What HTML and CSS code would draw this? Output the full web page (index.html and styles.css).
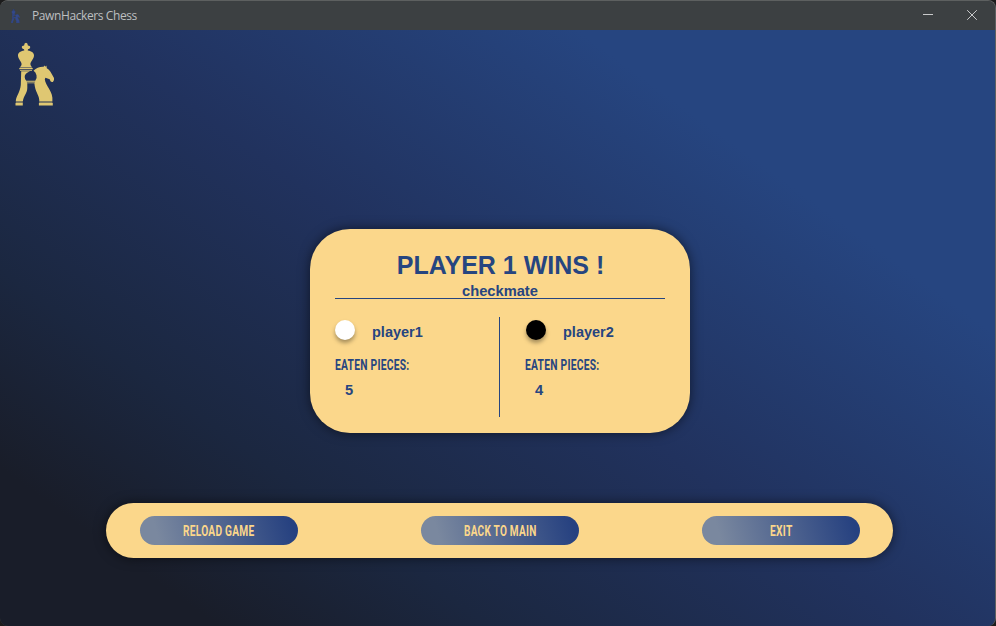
FILE: index.html
```html
<!DOCTYPE html>
<html lang="en">
<head>
<meta charset="utf-8">
<title>PawnHackers Chess</title>
<link rel="stylesheet" href="styles.css">
</head>
<body>
<svg width="0" height="0" class="defs" aria-hidden="true">
  <symbol id="pieces" viewBox="0 0 40 64">
    <path d="M11 .8q1.800 0 1.900 2.600q2.300 0 2.400 1.700t-2.300 2.100l-.3 1.200C17 9.200 19 10.600 19 13.500c0 3.500-3.700 6-3.600 8.800q.1 2 2 3.200H4.600q1.900-1.200 2-3.200C6.700 19.500 3 17 3 13.500c0-2.900 2-4.300 6.300-5.100L9 7.200Q6.700 6.800 6.700 5.100T9.100 3.400Q9.200 .8 11 .8z"/>
    <path d="M4.300 26h13.400v1.200H4.300zM5 27.900h12v.8H5z"/>
    <path d="M6.200 29.300H15q-5.500 2.200-5.300 5.800.1 2.200 1.400 3.300l1.200 3V46c0 5-3.700 8-4.400 12.900H.8C1 54.500 5.200 50 5.800 43z"/>
    <path d="M10.200 38.700h11v1h-11zM10.200 40.400h11v.9h-11z"/>
    <path d="M18.500 28.700q4.200-4.300 10-4l1.300-1.300.7 1.400.9-1.400.4 2.900c3.200 1.600 4.200 4.700 7.200 9.700q.6 2.800-1.100 4-1.700.4-2.400-.7l-.8-2.100-4.300-1.500-.6 1.500c.4 6.300 8.800 12.600 7.600 21.700H24.300c.2-5.500-4.300-9.400-4.900-17.500l1.100-3.200q1.700-1.700 1-5t-3-4.500z"/>
    <path d="M.8 59.500h7v.9h-7zM.5 61h7.300v2.400H.5zM24.200 59.500h13.200v.9H24.200zM23.900 61h13.900v2.400H23.900z"/>
  </symbol>
</svg>
<div class="window">
  <header class="titlebar">
    <svg class="app-icon"><use href="#pieces"/></svg>
    <span class="app-title">PawnHackers Chess</span>
    <svg class="controls" viewBox="0 0 60 14"><path d="M1 6.500h10M45.200 2.200l9.600 9.600M54.800 2.200l-9.600 9.600"/></svg>
  </header>
  <main class="board">
    <svg class="logo"><use href="#pieces"/></svg>
    <section class="card">
      <h1>PLAYER 1 WINS !</h1>
      <p class="reason">checkmate</p>
      <div class="players">
        <div class="player">
          <div class="who"><i class="dot white"></i><span>player1</span></div>
          <svg class="label" width="120" height="24"><text x="0" y="17" textLength="74.500" lengthAdjust="spacingAndGlyphs">EATEN PIECES:</text></svg>
          <b class="count">5</b>
        </div>
        <div class="player second">
          <div class="who"><i class="dot black"></i><span>player2</span></div>
          <svg class="label" width="120" height="24"><text x="0" y="17" textLength="74.500" lengthAdjust="spacingAndGlyphs">EATEN PIECES:</text></svg>
          <b class="count">4</b>
        </div>
      </div>
    </section>
    <nav class="actions">
      <button><svg width="158" height="28"><text x="43" y="18.500" textLength="71.500" lengthAdjust="spacingAndGlyphs">RELOAD GAME</text></svg></button>
      <button><svg width="158" height="28"><text x="43" y="18.500" textLength="72.500" lengthAdjust="spacingAndGlyphs">BACK TO MAIN</text></svg></button>
      <button><svg width="158" height="28"><text x="68" y="18.500" textLength="22.500" lengthAdjust="spacingAndGlyphs">EXIT</text></svg></button>
    </nav>
  </main>
</div>
</body>
</html>
```
FILE: styles.css
```css
* { box-sizing: border-box; }
body { margin: 0; background: #1c1c1c; font-family: "Liberation Sans", Arial, sans-serif; }
.defs { display: block; height: 0; }
.window {
  width: 996px; height: 626px; display: flex; flex-direction: column;
  border: 1px solid #5d6060; border-left: 0; border-bottom: 0;
  border-radius: 8px; overflow: hidden; background: #3c3f41;
}
.titlebar {
  flex: 0 0 29px; display: flex; align-items: center; padding: 0 13px 0 11px;
  background: #3c4042; color: #bdbfc0;
}
.app-icon { width: 9px; height: 14px; fill: #34498a; stroke: #34498a; stroke-width: 1.5px; }
.app-title { margin-left: 12px; font: 12px "Open Sans", "Noto Sans", sans-serif; letter-spacing: -.4px; }
.controls { width: 60px; height: 14px; margin: -2px 0 0 auto; fill: none; stroke: #c9cacb; stroke-width: 1; }
.board {
  flex: 1; display: flex; flex-direction: column; align-items: center;
  background: linear-gradient(36deg, #191d29 12%, #1b2740 27%, #21325e 50%, #264580 77%);
}
.logo { align-self: flex-start; width: 40px; height: 64px; margin: 12px 0 0 15px; fill: #dfc772; }
.card {
  width: 380px; height: 204px; margin: 123px 0 0 5px; padding: 20px 25px 0;
  border-radius: 40px; background: #fbd78b; color: #264580;
  box-shadow: 0 0 12px rgba(0, 0, 0, .55);
}
h1 { margin: 0 0 0 1px; font-size: 25px; line-height: 32px; text-align: center; }
.reason {
  height: 18px; margin: 0; font-size: 14.67px; font-weight: bold; line-height: 20px;
  text-align: center; border-bottom: 1px solid #264580;
}
.players { display: flex; margin-top: 18px; height: 100px; }
.player { width: 165px; border-right: 1px solid #264580; }
.player.second { border: 0; padding-left: 25px; }
.who { display: flex; align-items: center; height: 26px; font-size: 14.5px; font-weight: bold; }
.who span { margin: 3px 0 0 17px; }
.dot { width: 20px; height: 20px; border-radius: 50%; box-shadow: 0 3px 4px rgba(0, 0, 0, .35); }
.second .dot { margin-left: 1px; }
.white { background: #fff; }
.black { background: #000; }
.label { display: block; margin-top: 10px; }
text { font: bold 15.5px Roboto, sans-serif; letter-spacing: .4px; fill: currentColor; }
.count { display: block; margin: 5px 0 0 10px; font-size: 14.67px; line-height: 17px; }
.actions {
  display: flex; justify-content: space-between; align-items: center;
  width: 787px; height: 55px; margin: 70px 0 0 4px; padding: 0 33px 0 34px;
  border-radius: 28px; background: #fbd78b;
  box-shadow: 0 0 12px rgba(0, 0, 0, .55);
}
button {
  display: flex; align-items: center; justify-content: center;
  width: 158px; height: 29px; padding: 0; border: 0; border-radius: 15px;
  background: linear-gradient(75deg, #7a889f 12%, #264180 95%); color: #fbd78b;
}
```
